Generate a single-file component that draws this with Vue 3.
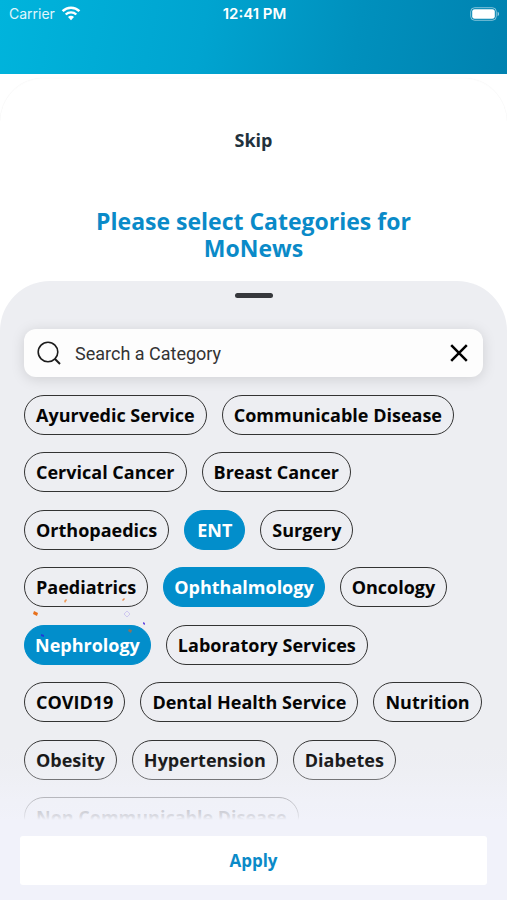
<script setup>
import { ref } from "vue";

const keyword = ref("");

const categories = ref([
    { name: "Ayurvedic Service", selected: false },
    { name: "Communicable Disease", selected: false },
    { name: "Cervical Cancer", selected: false },
    { name: "Breast Cancer", selected: false },
    { name: "Orthopaedics", selected: false },
    { name: "ENT", selected: true },
    { name: "Surgery", selected: false },
    { name: "Paediatrics", selected: false },
    { name: "Ophthalmology", selected: true },
    { name: "Oncology", selected: false },
    { name: "Nephrology", selected: true, confetti: true },
    { name: "Laboratory Services", selected: false },
    { name: "COVID19", selected: false },
    { name: "Dental Health Service", selected: false },
    { name: "Nutrition", selected: false },
    { name: "Obesity", selected: false },
    { name: "Hypertension", selected: false },
    { name: "Diabetes", selected: false },
    { name: "Non Communicable Disease", selected: false },
]);

const toggle = (item) => {
    item.selected = !item.selected;
};
</script>

<template>
    <div class="screen">
        <header class="header">
            <div class="status">
                <div class="status_carrier">
                    <span>Carrier</span>
                    <svg width="20" height="15" viewBox="0 0 20 15" fill="none">
                        <path d="M1.6 5.2a12 12 0 0 1 16.8 0" stroke="#fff" stroke-width="2.5" />
                        <path d="M4.7 8.5a7.6 7.6 0 0 1 10.6 0" stroke="#fff" stroke-width="2.4" />
                        <path d="M10 14.2 7 11.1a4.2 4.2 0 0 1 6 0z" fill="#fff" />
                    </svg>
                </div>
                <span class="status_time">12:41 PM</span>
                <svg class="status_battery" width="30" height="14" viewBox="0 0 30 14" fill="none">
                    <rect x="0.7" y="0.7" width="25.6" height="12.6" rx="4" stroke="#fff" stroke-opacity="0.5" />
                    <rect x="2.2" y="2.2" width="22.6" height="9.6" rx="2.4" fill="#fff" />
                    <path d="M27.6 4.8c1.9.7 1.9 3.7 0 4.4z" fill="#fff" fill-opacity="0.6" />
                </svg>
            </div>
        </header>

        <main class="card">
            <button type="button" class="skip">Skip</button>
            <h1 class="title">Please select Categories for MoNews</h1>

            <section class="sheet">
                <div class="sheet_handle"></div>

                <div class="search">
                    <svg width="24" height="24" viewBox="0 0 24 24" fill="none" stroke="#1c1c1c" stroke-width="1.6">
                        <circle cx="11" cy="11" r="9.8" />
                        <path d="m18 18 5 5" stroke-width="2" />
                    </svg>
                    <input v-model="keyword" type="text" placeholder="Search a Category" aria-label="Search a Category" />
                    <button type="button" class="search_clear" aria-label="Clear" @click="keyword = ''">
                        <svg width="18" height="18" viewBox="0 0 18 18" fill="none" stroke="#000" stroke-width="2.5">
                            <path d="m1.2 1.2 15.6 15.6M16.8 1.2 1.2 16.8" />
                        </svg>
                    </button>
                </div>

                <ul class="chips">
                    <li v-for="item in categories" :key="item.name">
                        <button type="button" class="chip" :class="{ 'is-selected': item.selected }"
                            :aria-pressed="item.selected" @click="toggle(item)">
                            {{ item.name }}
                        </button>
                        <svg v-if="item.confetti" class="confetti" width="127" height="40" viewBox="0 0 127 40">
                            <path d="m10 10 4 2-1 3-4-2z" fill="#e8701c" />
                            <path d="m40 0 2-2 1 1-2 3z" fill="#f09a58" />
                            <path d="m98-1 2-2 1 1-2 2z" fill="#e8894a" />
                            <path d="m103 10 3 3-3 3-3-3z" fill="none" stroke="#cfc8f0" />
                            <path d="m119 21 2 1v2l-2-1z" fill="#6a4fe0" />
                            <path d="m105 28 3 1-1 3-3-2z" fill="#8a7260" />
                            <path d="m17 33 3 1v2l-3-1z" fill="#2438d8" />
                        </svg>
                    </li>
                </ul>
            </section>
        </main>

        <footer class="footer">
            <button type="button" class="apply">Apply</button>
        </footer>
    </div>
</template>

<style>
body {
    margin: 0;
}
</style>

<style scoped>
.screen {
    position: relative;
    display: flex;
    flex-direction: column;
    min-height: 100vh;
    background-color: #fff;
    font-family: "Open Sans", "Noto Sans", sans-serif;
}

button {
    padding: 0;
    border: 0;
    background: none;
    font-family: inherit;
    cursor: pointer;
}

.header {
    height: 74px;
    background: linear-gradient(100deg, #00b4dc 0%, #00a4d0 40%, #0090bd 70%, #0082b0 100%);
}

.status {
    display: grid;
    grid-template-columns: 1fr auto 1fr;
    align-items: center;
    height: 27px;
    padding: 0 7px 0 9px;
    color: #fff;
    font-family: Inter, "Liberation Sans", sans-serif;
    font-size: 15px;
}

.status_carrier {
    display: flex;
    align-items: center;
    gap: 6px;
    color: #e0f6fc;
    font-size: 14px;
}

.status_time {
    font-weight: 600;
}

.status_battery {
    justify-self: end;
}

.card {
    flex: 1;
    display: flex;
    flex-direction: column;
    margin-top: 4px;
    border-top: 1px solid #fdfdfd;
    border-radius: 44px 44px 0 0;
    box-shadow: 0 0 1px #e4e4e4;
}

.skip {
    align-self: center;
    margin-top: 48px;
    color: #22313c;
    font-size: 18px;
    font-weight: 700;
    line-height: 26px;
}

.title {
    max-width: 340px;
    margin: 55px auto 19px;
    color: #0a8ac8;
    font-size: 23px;
    font-weight: 700;
    line-height: 27px;
    text-align: center;
}

.sheet {
    flex: 1;
    display: flex;
    flex-direction: column;
    padding: 12px 24px 63px;
    border-radius: 50px 50px 0 0;
    background-color: #edeef2;
}

.sheet_handle {
    align-self: center;
    width: 38px;
    height: 5px;
    border-radius: 3px;
    background-color: #36383c;
}

.search {
    display: flex;
    align-items: center;
    height: 48px;
    margin: 31px 0 18px;
    padding: 0 15px 0 13px;
    border-radius: 12px;
    background-color: #fdfdfd;
    box-shadow: 0 2px 14px rgba(0, 0, 0, 0.13);
}

.search input {
    flex: 1;
    min-width: 0;
    margin: 0 14px;
    padding: 0;
    border: 0;
    outline: 0;
    background: none;
    color: #333;
    font-family: Roboto, "Liberation Sans", sans-serif;
    font-size: 18px;
}

.search input::placeholder {
    color: #333;
    opacity: 1;
}

.search_clear {
    display: flex;
}

.chips {
    flex: 1;
    display: flex;
    flex-wrap: wrap;
    align-content: space-between;
    gap: 16px 15px;
    margin: 0;
    padding: 0;
    list-style: none;
}

.chips li {
    position: relative;
    height: 40px;
}

.chip {
    min-width: 61px;
    height: 40px;
    padding: 0 11px;
    border: 1px solid #333;
    border-radius: 20px;
    color: #050505;
    font-size: 18px;
    font-weight: 700;
    white-space: nowrap;
}

.chip.is-selected {
    padding: 0 10px;
    border-color: #028ecb;
    background-color: #028ecb;
    color: #fff;
}

.confetti {
    position: absolute;
    top: -24px;
    left: 0;
    overflow: visible;
    pointer-events: none;
}

/* 底部按鈕，上方漸層蓋住列表 */
.footer {
    position: absolute;
    right: 0;
    bottom: 0;
    left: 0;
    padding: 96px 20px 15px;
    background: linear-gradient(to bottom, #f1f2fa00 0, #f1f2fa1a 24px, #f1f2fa59 40px, #f1f2fab3 58px, #f1f2fae6 76px, #f1f2fa 80px);
    pointer-events: none;
}

.apply {
    width: 100%;
    height: 49px;
    border-radius: 3px;
    background-color: #fff;
    color: #0a8ac8;
    font-size: 17px;
    font-weight: 700;
    pointer-events: auto;
}
</style>
